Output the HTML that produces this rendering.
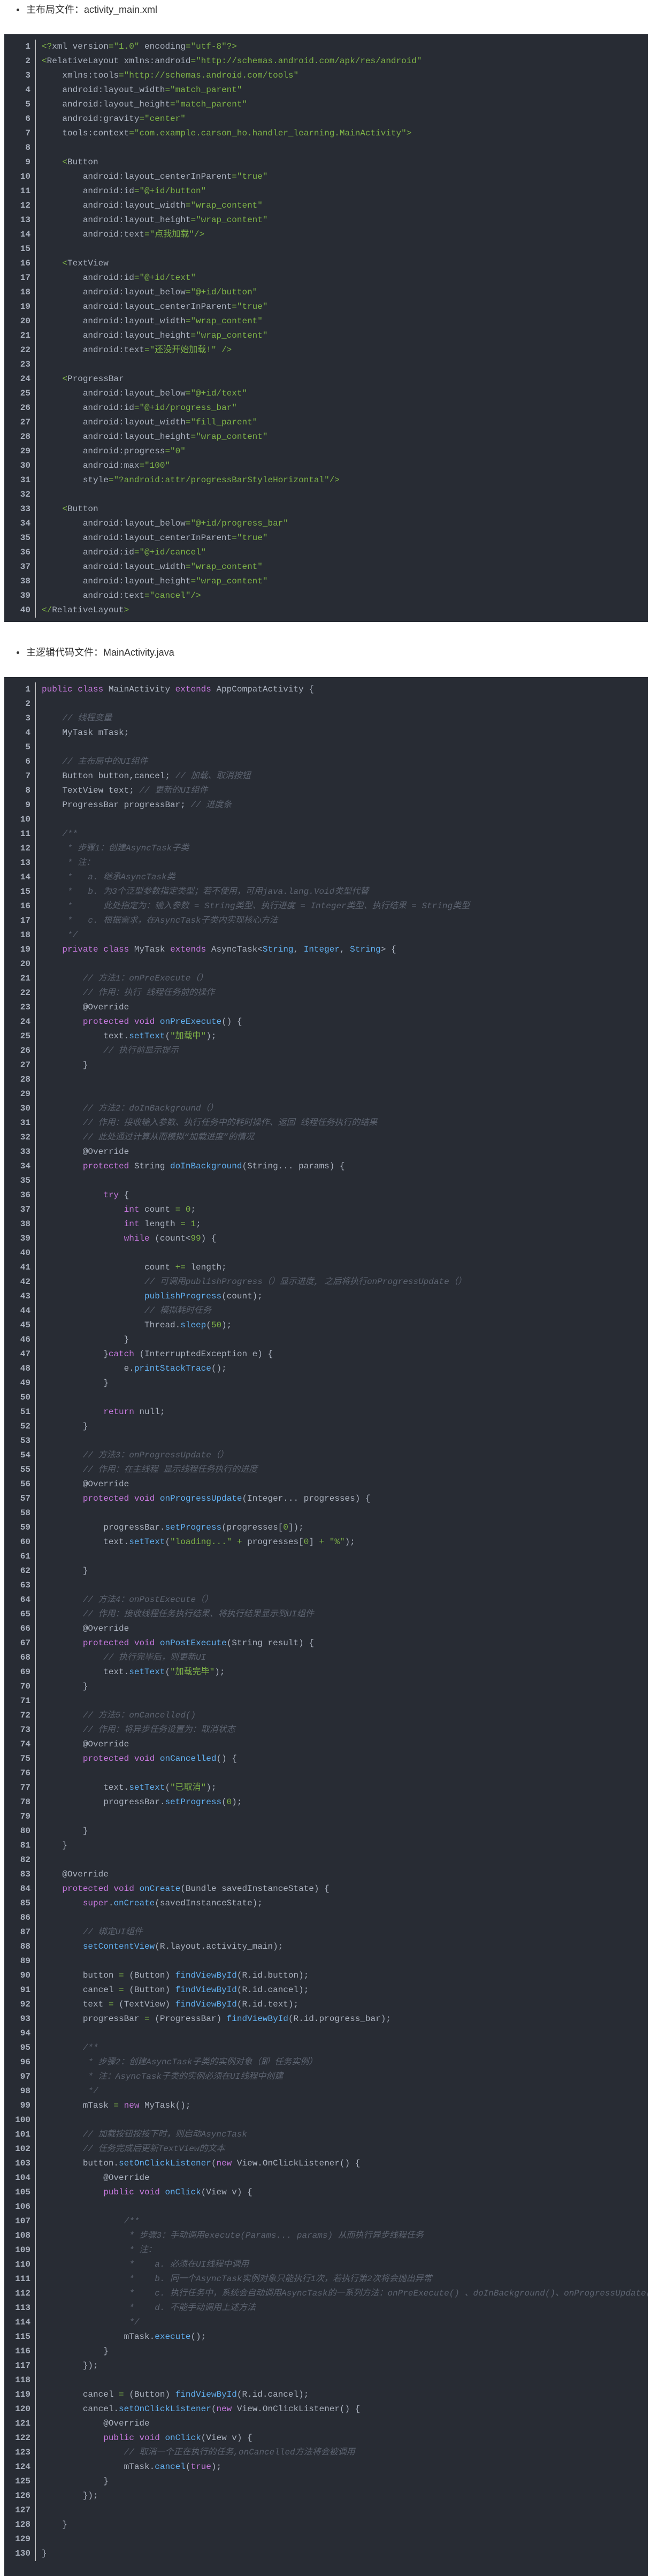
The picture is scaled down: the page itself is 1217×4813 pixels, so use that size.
<!DOCTYPE html>
<html><head><meta charset="utf-8"><style>
*{margin:0;padding:0;box-sizing:border-box}
html,body{width:1217px;height:4813px;background:#fff;overflow:hidden}
body{position:relative;font-family:"Liberation Sans","Noto Sans CJK SC",sans-serif}
.h{position:absolute;left:31px;font-size:18px;color:#333;line-height:24px}
.h:before{content:"";position:absolute;left:0;top:10px;width:5px;height:5px;border-radius:50%;background:#333}
.h span{margin-left:18px}
.blk{position:absolute;left:8px;width:1203px;background:#282c34;overflow:hidden}
.g{position:absolute;left:0;top:10px;width:59px;border-right:1px solid #c8c8c8;text-align:right;padding-right:9px;color:#abb2bf;font-family:"Liberation Mono",monospace;font-size:16px;line-height:27px;font-weight:bold}
pre{position:absolute;left:70px;top:10px;font-family:"Liberation Mono","Noto Sans CJK SC",monospace;font-size:16px;line-height:27px;color:#abb2bf;white-space:pre}
.k{color:#c678dd}.s{color:#7fb347}.c{color:#5c6370;font-style:italic}.f{color:#61afef}.n{color:#7fb347}.o{color:#7fb347}
</style></head><body>
<div class="h" style="top:6px"><span>主布局文件：activity_main.xml</span></div>
<div class="blk" style="top:64px;height:1098px">
<div class="g" style="height:1080px">1<br>2<br>3<br>4<br>5<br>6<br>7<br>8<br>9<br>10<br>11<br>12<br>13<br>14<br>15<br>16<br>17<br>18<br>19<br>20<br>21<br>22<br>23<br>24<br>25<br>26<br>27<br>28<br>29<br>30<br>31<br>32<br>33<br>34<br>35<br>36<br>37<br>38<br>39<br>40</div>
<pre><span class="o">&lt;?</span>xml version<span class="o">=</span><span class="s">"1.0"</span> encoding<span class="o">=</span><span class="s">"utf-8"</span><span class="o">?&gt;</span>
<span class="o">&lt;</span>RelativeLayout xmlns:android<span class="o">=</span><span class="s">"http://schemas.android.com/apk/res/android"</span>
    xmlns:tools<span class="o">=</span><span class="s">"http://schemas.android.com/tools"</span>
    android:layout_width<span class="o">=</span><span class="s">"match_parent"</span>
    android:layout_height<span class="o">=</span><span class="s">"match_parent"</span>
    android:gravity<span class="o">=</span><span class="s">"center"</span>
    tools:context<span class="o">=</span><span class="s">"com.example.carson_ho.handler_learning.MainActivity"</span><span class="o">&gt;</span>

    <span class="o">&lt;</span>Button
        android:layout_centerInParent<span class="o">=</span><span class="s">"true"</span>
        android:id<span class="o">=</span><span class="s">"@+id/button"</span>
        android:layout_width<span class="o">=</span><span class="s">"wrap_content"</span>
        android:layout_height<span class="o">=</span><span class="s">"wrap_content"</span>
        android:text<span class="o">=</span><span class="s">"点我加载"</span><span class="o">/&gt;</span>

    <span class="o">&lt;</span>TextView
        android:id<span class="o">=</span><span class="s">"@+id/text"</span>
        android:layout_below<span class="o">=</span><span class="s">"@+id/button"</span>
        android:layout_centerInParent<span class="o">=</span><span class="s">"true"</span>
        android:layout_width<span class="o">=</span><span class="s">"wrap_content"</span>
        android:layout_height<span class="o">=</span><span class="s">"wrap_content"</span>
        android:text<span class="o">=</span><span class="s">"还没开始加载!"</span> <span class="o">/&gt;</span>

    <span class="o">&lt;</span>ProgressBar
        android:layout_below<span class="o">=</span><span class="s">"@+id/text"</span>
        android:id<span class="o">=</span><span class="s">"@+id/progress_bar"</span>
        android:layout_width<span class="o">=</span><span class="s">"fill_parent"</span>
        android:layout_height<span class="o">=</span><span class="s">"wrap_content"</span>
        android:progress<span class="o">=</span><span class="s">"0"</span>
        android:max<span class="o">=</span><span class="s">"100"</span>
        style<span class="o">=</span><span class="s">"?android:attr/progressBarStyleHorizontal"</span><span class="o">/&gt;</span>

    <span class="o">&lt;</span>Button
        android:layout_below<span class="o">=</span><span class="s">"@+id/progress_bar"</span>
        android:layout_centerInParent<span class="o">=</span><span class="s">"true"</span>
        android:id<span class="o">=</span><span class="s">"@+id/cancel"</span>
        android:layout_width<span class="o">=</span><span class="s">"wrap_content"</span>
        android:layout_height<span class="o">=</span><span class="s">"wrap_content"</span>
        android:text<span class="o">=</span><span class="s">"cancel"</span><span class="o">/&gt;</span>
<span class="o">&lt;/</span>RelativeLayout<span class="o">&gt;</span></pre>
</div>

<div class="h" style="top:1207px"><span>主逻辑代码文件：MainActivity.java</span></div>
<div class="blk" style="top:1265px;height:3548px">
<div class="g" style="height:3510px">1<br>2<br>3<br>4<br>5<br>6<br>7<br>8<br>9<br>10<br>11<br>12<br>13<br>14<br>15<br>16<br>17<br>18<br>19<br>20<br>21<br>22<br>23<br>24<br>25<br>26<br>27<br>28<br>29<br>30<br>31<br>32<br>33<br>34<br>35<br>36<br>37<br>38<br>39<br>40<br>41<br>42<br>43<br>44<br>45<br>46<br>47<br>48<br>49<br>50<br>51<br>52<br>53<br>54<br>55<br>56<br>57<br>58<br>59<br>60<br>61<br>62<br>63<br>64<br>65<br>66<br>67<br>68<br>69<br>70<br>71<br>72<br>73<br>74<br>75<br>76<br>77<br>78<br>79<br>80<br>81<br>82<br>83<br>84<br>85<br>86<br>87<br>88<br>89<br>90<br>91<br>92<br>93<br>94<br>95<br>96<br>97<br>98<br>99<br>100<br>101<br>102<br>103<br>104<br>105<br>106<br>107<br>108<br>109<br>110<br>111<br>112<br>113<br>114<br>115<br>116<br>117<br>118<br>119<br>120<br>121<br>122<br>123<br>124<br>125<br>126<br>127<br>128<br>129<br>130</div>
<pre><span class="k">public</span> <span class="k">class</span> MainActivity <span class="k">extends</span> AppCompatActivity {

    <span class="c">// 线程变量</span>
    MyTask mTask;

    <span class="c">// 主布局中的UI组件</span>
    Button button,cancel; <span class="c">// 加载、取消按钮</span>
    TextView text; <span class="c">// 更新的UI组件</span>
    ProgressBar progressBar; <span class="c">// 进度条</span>

    <span class="c">/**</span>
<span class="c">     * 步骤1：创建AsyncTask子类</span>
<span class="c">     * 注：</span>
<span class="c">     *   a. 继承AsyncTask类</span>
<span class="c">     *   b. 为3个泛型参数指定类型；若不使用，可用java.lang.Void类型代替</span>
<span class="c">     *      此处指定为：输入参数 = String类型、执行进度 = Integer类型、执行结果 = String类型</span>
<span class="c">     *   c. 根据需求，在AsyncTask子类内实现核心方法</span>
<span class="c">     */</span>
    <span class="k">private</span> <span class="k">class</span> MyTask <span class="k">extends</span> AsyncTask&lt;<span class="f">String</span>, <span class="f">Integer</span>, <span class="f">String</span>&gt; {

        <span class="c">// 方法1：onPreExecute（）</span>
        <span class="c">// 作用：执行 线程任务前的操作</span>
        @Override
        <span class="k">protected</span> <span class="k">void</span> <span class="f">onPreExecute</span>() {
            text.<span class="f">setText</span>(<span class="s">"加载中"</span>);
            <span class="c">// 执行前显示提示</span>
        }


        <span class="c">// 方法2：doInBackground（）</span>
        <span class="c">// 作用：接收输入参数、执行任务中的耗时操作、返回 线程任务执行的结果</span>
        <span class="c">// 此处通过计算从而模拟“加载进度”的情况</span>
        @Override
        <span class="k">protected</span> String <span class="f">doInBackground</span>(String... params) {

            <span class="k">try</span> {
                <span class="k">int</span> count <span class="o">=</span> <span class="n">0</span>;
                <span class="k">int</span> length <span class="o">=</span> <span class="n">1</span>;
                <span class="k">while</span> (count&lt;<span class="n">99</span>) {

                    count <span class="o">+=</span> length;
                    <span class="c">// 可调用publishProgress（）显示进度, 之后将执行onProgressUpdate（）</span>
                    <span class="f">publishProgress</span>(count);
                    <span class="c">// 模拟耗时任务</span>
                    Thread.<span class="f">sleep</span>(<span class="n">50</span>);
                }
            }<span class="k">catch</span> (InterruptedException e) {
                e.<span class="f">printStackTrace</span>();
            }

            <span class="k">return</span> null;
        }

        <span class="c">// 方法3：onProgressUpdate（）</span>
        <span class="c">// 作用：在主线程 显示线程任务执行的进度</span>
        @Override
        <span class="k">protected</span> <span class="k">void</span> <span class="f">onProgressUpdate</span>(Integer... progresses) {

            progressBar.<span class="f">setProgress</span>(progresses[<span class="n">0</span>]);
            text.<span class="f">setText</span>(<span class="s">"loading..."</span> <span class="o">+</span> progresses[<span class="n">0</span>] <span class="o">+</span> <span class="s">"%"</span>);

        }

        <span class="c">// 方法4：onPostExecute（）</span>
        <span class="c">// 作用：接收线程任务执行结果、将执行结果显示到UI组件</span>
        @Override
        <span class="k">protected</span> <span class="k">void</span> <span class="f">onPostExecute</span>(String result) {
            <span class="c">// 执行完毕后，则更新UI</span>
            text.<span class="f">setText</span>(<span class="s">"加载完毕"</span>);
        }

        <span class="c">// 方法5：onCancelled()</span>
        <span class="c">// 作用：将异步任务设置为：取消状态</span>
        @Override
        <span class="k">protected</span> <span class="k">void</span> <span class="f">onCancelled</span>() {

            text.<span class="f">setText</span>(<span class="s">"已取消"</span>);
            progressBar.<span class="f">setProgress</span>(<span class="n">0</span>);

        }
    }

    @Override
    <span class="k">protected</span> <span class="k">void</span> <span class="f">onCreate</span>(Bundle savedInstanceState) {
        <span class="k">super</span>.<span class="f">onCreate</span>(savedInstanceState);

        <span class="c">// 绑定UI组件</span>
        <span class="f">setContentView</span>(R.layout.activity_main);

        button <span class="o">=</span> (Button) <span class="f">findViewById</span>(R.id.button);
        cancel <span class="o">=</span> (Button) <span class="f">findViewById</span>(R.id.cancel);
        text <span class="o">=</span> (TextView) <span class="f">findViewById</span>(R.id.text);
        progressBar <span class="o">=</span> (ProgressBar) <span class="f">findViewById</span>(R.id.progress_bar);

        <span class="c">/**</span>
<span class="c">         * 步骤2：创建AsyncTask子类的实例对象（即 任务实例）</span>
<span class="c">         * 注：AsyncTask子类的实例必须在UI线程中创建</span>
<span class="c">         */</span>
        mTask <span class="o">=</span> <span class="k">new</span> MyTask();

        <span class="c">// 加载按钮按按下时，则启动AsyncTask</span>
        <span class="c">// 任务完成后更新TextView的文本</span>
        button.<span class="f">setOnClickListener</span>(<span class="k">new</span> View.OnClickListener() {
            @Override
            <span class="k">public</span> <span class="k">void</span> <span class="f">onClick</span>(View v) {

                <span class="c">/**</span>
<span class="c">                 * 步骤3：手动调用execute(Params... params) 从而执行异步线程任务</span>
<span class="c">                 * 注：</span>
<span class="c">                 *    a. 必须在UI线程中调用</span>
<span class="c">                 *    b. 同一个AsyncTask实例对象只能执行1次，若执行第2次将会抛出异常</span>
<span class="c">                 *    c. 执行任务中，系统会自动调用AsyncTask的一系列方法：onPreExecute() 、doInBackground()、onProgressUpdate() 、onPostExecute()</span>
<span class="c">                 *    d. 不能手动调用上述方法</span>
<span class="c">                 */</span>
                mTask.<span class="f">execute</span>();
            }
        });

        cancel <span class="o">=</span> (Button) <span class="f">findViewById</span>(R.id.cancel);
        cancel.<span class="f">setOnClickListener</span>(<span class="k">new</span> View.OnClickListener() {
            @Override
            <span class="k">public</span> <span class="k">void</span> <span class="f">onClick</span>(View v) {
                <span class="c">// 取消一个正在执行的任务,onCancelled方法将会被调用</span>
                mTask.<span class="f">cancel</span>(<span class="k">true</span>);
            }
        });

    }

}</pre>
</div>
</body></html>
